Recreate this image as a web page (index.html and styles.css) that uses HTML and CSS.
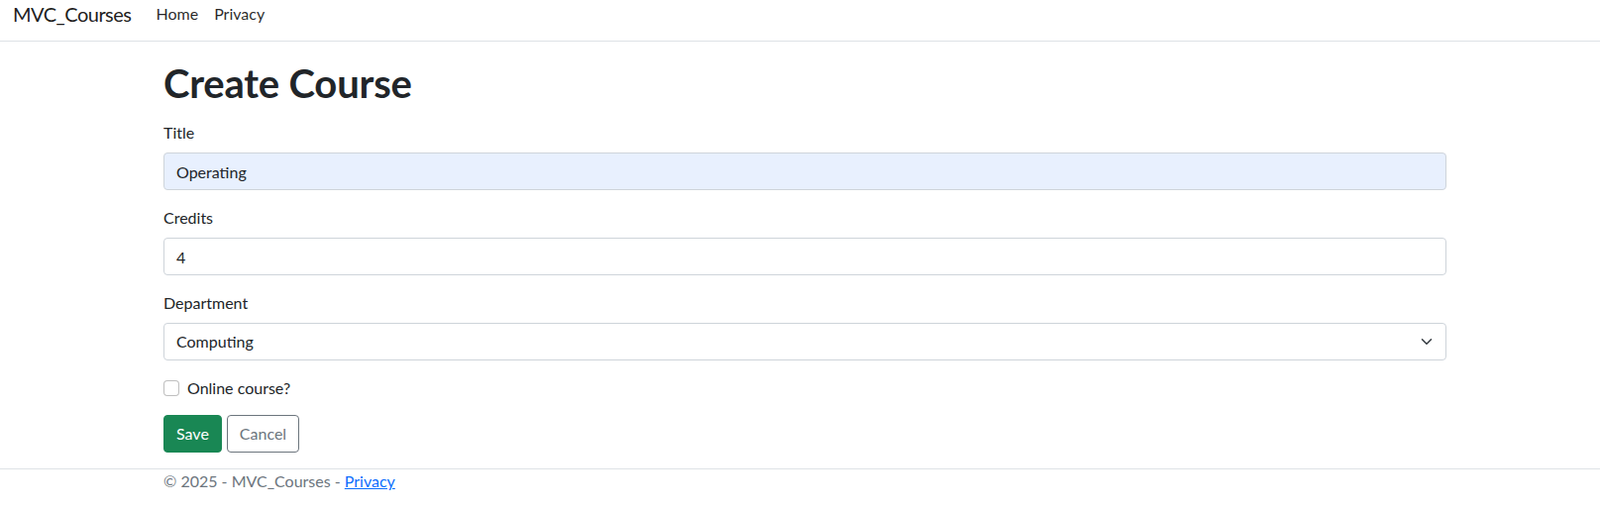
FILE: index.html
```html
<!DOCTYPE html>
<html lang="en">
<head>
<meta charset="utf-8">
<title>Create Course - MVC_Courses</title>
<link rel="stylesheet" href="styles.css">
</head>
<body>
<header class="navbar">
  <a class="brand" href="#">MVC_Courses</a>
  <nav class="nav-links">
    <a class="nav-link" href="#">Home</a>
    <a class="nav-link" href="#">Privacy</a>
  </nav>
</header>
<main class="container">
  <h1 class="page-title">Create Course</h1>
  <form class="form">
    <div class="form-group">
      <label class="form-label" for="title">Title</label>
      <input class="form-control autofill" id="title" type="text" value="Operating">
    </div>
    <div class="form-group">
      <label class="form-label" for="credits">Credits</label>
      <input class="form-control" id="credits" type="text" value="4">
    </div>
    <div class="form-group">
      <label class="form-label" for="dept">Department</label>
      <div class="select-wrap">
        <select class="form-control form-select" id="dept">
          <option>Computing</option>
        </select>
        <svg class="chevron" width="16" height="12" viewBox="0 0 16 16" aria-hidden="true"><path d="m2 5 6 6 6-6" fill="none" stroke="#343a40" stroke-width="2" stroke-linecap="round" stroke-linejoin="round"/></svg>
      </div>
    </div>
    <div class="form-check">
      <input class="check-input" id="online" type="checkbox">
      <label class="check-label" for="online">Online course?</label>
    </div>
    <div class="actions">
      <button class="btn btn-save" type="button">Save</button>
      <a class="btn btn-cancel" href="#">Cancel</a>
    </div>
  </form>
</main>
<footer class="footer">
  <div class="footer-inner">© 2025 - MVC_Courses - <a class="footer-link" href="#">Privacy</a></div>
</footer>
</body>
</html>
```
FILE: styles.css
```css
* { box-sizing: border-box; }
html, body { margin: 0; padding: 0; }
body {
  font-family: Lato, "Liberation Sans", sans-serif;
  font-size: 16px;
  line-height: 1.5;
  color: #212529;
  background: #fff;
}
a { text-decoration: none; }

.navbar {
  display: flex;
  align-items: flex-start;
  height: 42px;
  padding: 0 13px;
  border-bottom: 1px solid #dee2e6;
}
.brand {
  font-size: 20px;
  line-height: 29px;
  letter-spacing: -0.5px;
  color: rgba(0,0,0,.9);
  margin-right: 17px;
}
.nav-links { display: flex; }
.nav-link {
  font-size: 16px;
  line-height: 28px;
  color: rgba(0,0,0,.85);
  padding: 0 8px;
}

.container {
  width: 1295px;
  margin-left: 165px;
  padding-top: 18px;
}
.page-title {
  margin: 0 0 14px;
  font-size: 40px;
  line-height: 48px;
  font-weight: 700;
  letter-spacing: -0.2px;
}
.form-group { margin-bottom: 16px; }
.form-label {
  display: block;
  margin-bottom: 8px;
  line-height: 24px;
}
.form-control {
  display: block;
  width: 100%;
  height: 38px;
  padding: 6px 12px;
  font-family: inherit;
  font-size: 16px;
  line-height: 24px;
  color: #212529;
  background: #fff;
  border: 1px solid #ced4da;
  border-radius: 4px;
  outline: none;
}
.autofill { background: #e8f0fe; }
.select-wrap { position: relative; }
.form-select { appearance: none; -webkit-appearance: none; padding-right: 36px; }
.chevron { position: absolute; right: 12px; top: 13px; pointer-events: none; }

.form-check {
  display: flex;
  align-items: center;
  min-height: 24px;
  margin-bottom: 15px;
}
.check-input {
  appearance: none;
  -webkit-appearance: none;
  width: 16px;
  height: 16px;
  margin: 0 8px 0 0;
  border: 1px solid rgba(0,0,0,.25);
  border-radius: 4px;
  background: #fff;
}
.check-label { line-height: 24px; }

.actions { display: flex; gap: 5px; margin-bottom: 16px; }
.btn {
  display: inline-block;
  height: 38px;
  padding: 6px 12px;
  font-family: inherit;
  font-size: 16px;
  line-height: 24px;
  border: 1px solid transparent;
  border-radius: 4px;
  cursor: pointer;
}
.btn-save { background: #198754; border-color: #198754; color: #fff; }
.btn-cancel { background: #fff; border-color: #6c757d; color: #6c757d; }

.footer {
  border-top: 1px solid #dee2e6;
  color: #6c757d;
}
.footer-inner {
  margin-left: 165px;
  line-height: 24px;
}
.footer-link { color: #0d6efd; text-decoration: underline; }
```
